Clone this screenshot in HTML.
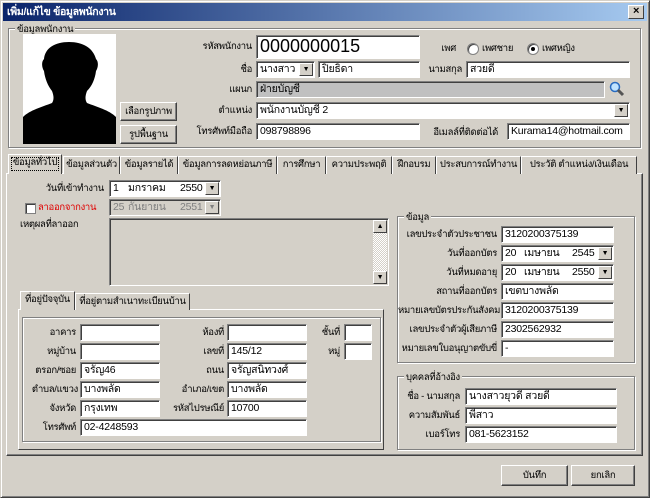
<!DOCTYPE html>
<html><head><meta charset="utf-8"><style>
*{box-sizing:border-box;margin:0;padding:0}
body{width:650px;height:498px;overflow:hidden;background:#d4d0c8;font-family:"Liberation Sans","Noto Sans CJK SC",sans-serif;font-size:9.5px;letter-spacing:-0.3px;color:#000;position:relative}
div,span{position:absolute}
.win{left:0;top:0;width:650px;height:498px;border:1px solid;border-color:#d4d0c8 #404040 #404040 #d4d0c8;box-shadow:inset 1px 1px #fff,inset -1px -1px #808080}
.title{left:3px;top:3px;width:644px;height:18px;background:linear-gradient(90deg,#0a246a,#a6caf0);color:#fff;font-weight:bold;font-size:10.5px;line-height:18px;padding-left:4px}
.x{left:628px;top:5px;width:16px;height:14px;background:#d4d0c8;border:1px solid;border-color:#fff #404040 #404040 #fff;font-size:11px;line-height:11px;text-align:center;font-weight:bold;color:#000}
.grp{border:1px solid #808080;box-shadow:1px 1px #fff,inset 1px 1px #fff}
.gl{background:#d4d0c8;padding:0 2px;top:-7px;left:6px;white-space:nowrap}
.in{background:#fff;height:17px;border:1px solid;border-color:#808080 #fff #fff #808080;box-shadow:inset 1px 1px #404040;line-height:15px;padding-left:3px;white-space:nowrap;overflow:hidden;font-size:10.5px;letter-spacing:-0.2px}
.dis{background:#d4d0c8;color:#808080}
.l{text-align:right;white-space:nowrap;line-height:17px}
.btn{background:#d4d0c8;border:1px solid;border-color:#fff #404040 #404040 #fff;box-shadow:inset -1px -1px #808080;text-align:center;line-height:17px}
.dd{right:1px;top:1px;width:14px;height:13px;background:#d4d0c8;border:1px solid;border-color:#fff #404040 #404040 #fff;font-size:7px;line-height:11px;text-align:center}
.tab{top:156px;height:18px;border:1px solid;border-color:#fff #404040 transparent #fff;border-bottom:none;line-height:16px;text-align:center;white-space:nowrap;background:#d4d0c8;overflow:hidden}
.rad{width:12px;height:12px;border-radius:50%;background:#fff;border:1px solid #808080;box-shadow:inset 1px 1px #404040}
</style></head><body>
<div class="win"></div>
<div class="title">เพิ่ม/แก้ไข ข้อมูลพนักงาน</div>
<div class="x">×</div>

<div class="grp" style="left:8px;top:28px;width:633px;height:120px"><span class="gl">ข้อมูลพนักงาน</span></div>
<div style="left:23px;top:34px;width:93px;height:110px;background:#fff;overflow:hidden">
<svg width="93" height="110" viewBox="0 0 93 110"><path d="M46 8c-14 0-24 6-25 17-3 3-2 9 0 12 1 8 4 15 8 20 2 5 2 9 0 12-10 4-22 7-29 14v27h93V83c-7-7-19-10-29-14-2-3-2-7 0-12 5-5 8-12 9-20 2-3 3-9 0-12C70 14 60 8 46 8z" fill="#000"/></svg></div>
<div class="btn" style="left:120px;top:102px;width:57px;height:19px">เลือกรูปภาพ</div>
<div class="btn" style="left:120px;top:125px;width:57px;height:19px">รูปพื้นฐาน</div>

<div class="l" style="left:180px;top:38px;width:72px">รหัสพนักงาน</div>
<div class="in" style="left:256px;top:35px;width:164px;height:24px;font-size:18px;line-height:21px;letter-spacing:0">0000000015</div>
<div class="l" style="left:430px;top:40px;width:26px">เพศ</div>
<div class="rad" style="left:467px;top:43px"></div><div class="l" style="left:482px;top:40px">เพศชาย</div>
<div class="rad" style="left:527px;top:43px"><span style="left:3px;top:3px;width:4px;height:4px;background:#000;border-radius:50%"></span></div><div class="l" style="left:542px;top:40px">เพศหญิง</div>

<div class="l" style="left:180px;top:61px;width:72px">ชื่อ</div>
<div class="in" style="left:256px;top:61px;width:59px">นางสาว<span class="dd">▼</span></div>
<div class="in" style="left:318px;top:61px;width:102px">ปิยธิดา</div>
<div class="l" style="left:420px;top:61px;width:42px">นามสกุล</div>
<div class="in" style="left:466px;top:61px;width:164px">สวยดี</div>

<div class="l" style="left:180px;top:81px;width:72px">แผนก</div>
<div class="in" style="left:256px;top:81px;width:349px;background:#c0c0c0">ฝ่ายบัญชี</div>
<svg style="position:absolute;left:609px;top:81px" width="16" height="16"><circle cx="6" cy="6" r="4.5" fill="#bfe3ff" stroke="#2a6cc0" stroke-width="1.5"/><path d="M9 9l5 5" stroke="#555" stroke-width="3"/></svg>

<div class="l" style="left:180px;top:102px;width:72px">ตำแหน่ง</div>
<div class="in" style="left:256px;top:102px;width:374px">พนักงานบัญชี 2<span class="dd">▼</span></div>

<div class="l" style="left:170px;top:123px;width:82px">โทรศัพท์มือถือ</div>
<div class="in" style="left:256px;top:123px;width:164px">098798896</div>
<div class="l" style="left:420px;top:124px;width:78px">อีเมลล์ที่ติดต่อได้</div>
<div class="in" style="left:507px;top:123px;width:123px">Kurama14@hotmail.com</div>

<!-- tab panel -->
<div style="left:6px;top:173px;width:637px;height:283px;border:1px solid;border-color:#fff #404040 #404040 #fff;box-shadow:inset -1px -1px #808080"></div>
<div class="tab" style="left:8px;width:54px;top:154px;height:20px;z-index:2;border-right-color:#404040"><span style="left:2px;top:2px;right:2px;bottom:3px;border:1px dotted #000"></span><span style="position:static">ข้อมูลทั่วไป</span></div>
<div class="tab" style="left:63px;width:57px">ข้อมูลส่วนตัว</div>
<div class="tab" style="left:120px;width:58px">ข้อมูลรายได้</div>
<div class="tab" style="left:178px;width:99px">ข้อมูลการลดหย่อนภาษี</div>
<div class="tab" style="left:277px;width:49px">การศึกษา</div>
<div class="tab" style="left:326px;width:66px">ความประพฤติ</div>
<div class="tab" style="left:392px;width:44px">ฝึกอบรม</div>
<div class="tab" style="left:436px;width:85px">ประสบการณ์ทำงาน</div>
<div class="tab" style="left:521px;width:116px">ประวัติ ตำแหน่ง/เงินเดือน</div>

<div class="l" style="left:20px;top:180px;width:84px">วันที่เข้าทำงาน</div>
<div class="in" style="left:109px;top:180px;width:112px">1<span style="left:18px">มกราคม</span><span style="left:70px">2550</span><span class="dd">▼</span></div>
<div style="left:25px;top:203px;width:11px;height:11px;background:#fff;border:1px solid #808080;box-shadow:inset 1px 1px #404040"></div>
<div class="l" style="left:38px;top:199px;color:#e00000">ลาออกจากงาน</div>
<div class="in dis" style="left:109px;top:199px;width:112px">25<span style="left:18px">กันยายน</span><span style="left:70px">2551</span><span class="dd" style="color:#808080">▼</span></div>
<div class="l" style="left:20px;top:216px">เหตุผลที่ลาออก</div>
<div class="in" style="left:109px;top:218px;width:280px;height:68px;background:#d4d0c8"><span style="right:1px;top:1px;width:14px;bottom:1px;background:repeating-conic-gradient(#fff 0 25%,#d4d0c8 0 50%) 0 0/2px 2px"></span><span class="dd" style="top:1px">▲</span><span class="dd" style="top:auto;bottom:1px">▼</span></div>

<!-- sub tabs -->
<div style="left:18px;top:309px;width:366px;height:141px;border:1px solid;border-color:#fff #404040 #404040 #fff"></div>
<div class="tab" style="left:20px;top:291px;width:55px;height:19px;z-index:2">ที่อยู่ปัจจุบัน</div>
<div class="tab" style="left:75px;top:293px;width:115px;height:17px">ที่อยู่ตามสำเนาทะเบียนบ้าน</div>
<div class="grp" style="left:22px;top:317px;width:359px;height:125px"></div>
<div class="l" style="left:22px;top:324px;width:54px">อาคาร</div><div class="in" style="left:80px;top:324px;width:80px"></div>
<div class="l" style="left:160px;top:324px;width:64px">ห้องที่</div><div class="in" style="left:227px;top:324px;width:80px"></div>
<div class="l" style="left:310px;top:324px;width:30px">ชั้นที่</div><div class="in" style="left:344px;top:324px;width:28px"></div>
<div class="l" style="left:22px;top:343px;width:54px">หมู่บ้าน</div><div class="in" style="left:80px;top:343px;width:80px"></div>
<div class="l" style="left:160px;top:343px;width:64px">เลขที่</div><div class="in" style="left:227px;top:343px;width:80px">145/12</div>
<div class="l" style="left:310px;top:343px;width:30px">หมู่</div><div class="in" style="left:344px;top:343px;width:28px"></div>
<div class="l" style="left:22px;top:362px;width:54px">ตรอก/ซอย</div><div class="in" style="left:80px;top:362px;width:80px">จรัญ46</div>
<div class="l" style="left:160px;top:362px;width:64px">ถนน</div><div class="in" style="left:227px;top:362px;width:80px">จรัญสนิทวงศ์</div>
<div class="l" style="left:22px;top:381px;width:56px">ตำบล/แขวง</div><div class="in" style="left:80px;top:381px;width:80px">บางพลัด</div>
<div class="l" style="left:160px;top:381px;width:64px">อำเภอ/เขต</div><div class="in" style="left:227px;top:381px;width:80px">บางพลัด</div>
<div class="l" style="left:22px;top:400px;width:54px">จังหวัด</div><div class="in" style="left:80px;top:400px;width:80px">กรุงเทพ</div>
<div class="l" style="left:160px;top:400px;width:64px">รหัสไปรษณีย์</div><div class="in" style="left:227px;top:400px;width:80px">10700</div>
<div class="l" style="left:22px;top:419px;width:54px">โทรศัพท์</div><div class="in" style="left:80px;top:419px;width:227px">02-4248593</div>

<!-- right groups -->
<div class="grp" style="left:397px;top:216px;width:238px;height:147px"><span class="gl">ข้อมูล</span></div>
<div class="l" style="left:400px;top:226px;width:97px">เลขประจำตัวประชาชน</div><div class="in" style="left:501px;top:226px;width:113px">3120200375139</div>
<div class="l" style="left:400px;top:245px;width:97px">วันที่ออกบัตร</div><div class="in" style="left:501px;top:245px;width:113px">20<span style="left:22px">เมษายน</span><span style="left:70px">2545</span><span class="dd">▼</span></div>
<div class="l" style="left:400px;top:264px;width:97px">วันที่หมดอายุ</div><div class="in" style="left:501px;top:264px;width:113px">20<span style="left:22px">เมษายน</span><span style="left:70px">2550</span><span class="dd">▼</span></div>
<div class="l" style="left:400px;top:283px;width:97px">สถานที่ออกบัตร</div><div class="in" style="left:501px;top:283px;width:113px">เขตบางพลัด</div>
<div class="l" style="left:398px;top:302px;width:99px">หมายเลขบัตรประกันสังคม</div><div class="in" style="left:501px;top:302px;width:113px">3120200375139</div>
<div class="l" style="left:398px;top:321px;width:99px">เลขประจำตัวผู้เสียภาษี</div><div class="in" style="left:501px;top:321px;width:113px">2302562932</div>
<div class="l" style="left:398px;top:340px;width:99px">หมายเลขใบอนุญาตขับขี่</div><div class="in" style="left:501px;top:340px;width:113px">-</div>

<div class="grp" style="left:397px;top:376px;width:238px;height:74px"><span class="gl">บุคคลที่อ้างอิง</span></div>
<div class="l" style="left:400px;top:388px;width:60px">ชื่อ - นามสกุล</div><div class="in" style="left:465px;top:388px;width:152px">นางสาวยุวดี สวยดี</div>
<div class="l" style="left:400px;top:407px;width:60px">ความสัมพันธ์</div><div class="in" style="left:465px;top:407px;width:152px">พี่สาว</div>
<div class="l" style="left:400px;top:426px;width:60px">เบอร์โทร</div><div class="in" style="left:465px;top:426px;width:152px">081-5623152</div>

<div class="btn" style="left:501px;top:465px;width:67px;height:21px;line-height:19px">บันทึก</div>
<div class="btn" style="left:571px;top:465px;width:64px;height:21px;line-height:19px">ยกเลิก</div>
</body></html>
